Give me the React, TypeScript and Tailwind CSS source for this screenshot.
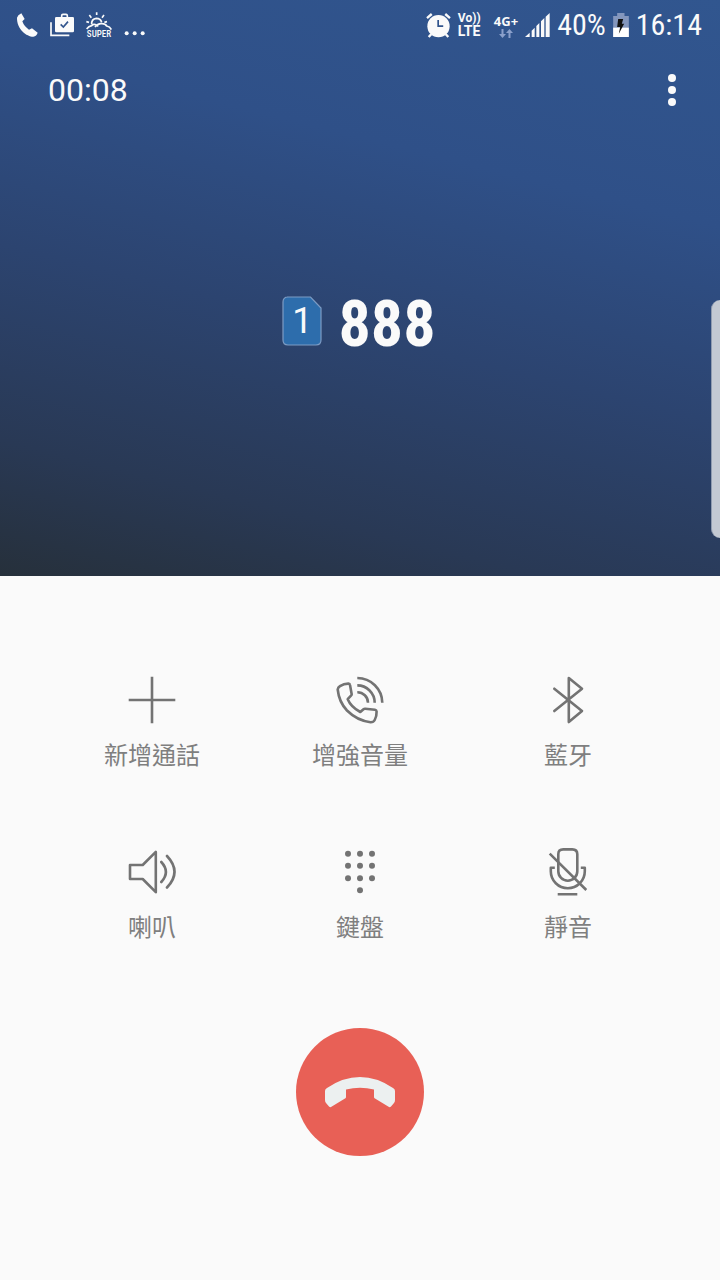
import type { ReactNode } from 'react'

function PhoneIcon() {
  return (
    <svg viewBox="48 36 66 72" className="h-6 w-[22px]" fill="currentColor" aria-hidden="true">
      <path d="M51 50Q53 42 64 37L74 54L67 61Q72 76 87 86L96 82L113 95Q110 105 100 107C80 107 50 84 51 50Z" />
    </svg>
  )
}

function ClipboardIcon() {
  return (
    <svg viewBox="156 38 72 72" className="size-6" fill="none" aria-hidden="true">
      <path d="M159 66V105H214" stroke="currentColor" strokeWidth="5" />
      <path d="M191 52V46Q191 42 195 42H204Q208 42 208 46V52" stroke="currentColor" strokeWidth="5" />
      <rect x="171" y="50" width="57" height="46" rx="4" fill="currentColor" />
      <path d="M188 72L196 80L210 64" stroke="#31548c" strokeWidth="5" />
    </svg>
  )
}

function SuperIcon() {
  return (
    <span className="flex w-[26px] flex-col items-center">
      <svg viewBox="262 29 78 54" className="h-[18px] w-[26px]" fill="none" stroke="currentColor" strokeWidth="5" aria-hidden="true">
        <path d="M264 80Q270 72 279 70Q285 64 293 68L299 72M289 74Q298 62 310 64Q320 64 324 71Q334 73 338 82" />
        <path d="M279 66Q278 50 293 48Q306 48 309 60" />
        <path d="M294 30V38M272 38L278 46M316 38L310 46M263 58L271 60M325 58L317 60" />
      </svg>
      <span className="text-[9px] leading-[9px] font-medium">SUPER</span>
    </span>
  )
}

function MoreDots() {
  return (
    <svg viewBox="372 66 66 66" className="size-[22px]" fill="currentColor" aria-hidden="true">
      <circle cx="380" cy="124" r="6" />
      <circle cx="404" cy="124" r="6" />
      <circle cx="428" cy="124" r="6" />
    </svg>
  )
}

function AlarmIcon() {
  return (
    <svg viewBox="30 36 74 74" className="size-[25px]" fill="none" stroke="currentColor" strokeWidth="7" aria-hidden="true">
      <circle cx="67" cy="75" r="33" fill="currentColor" stroke="none" />
      <path d="M33 51L47 39M101 51L87 39M46 98L38 107M88 98L96 107" />
      <path d="M66 57V75H81" stroke="#31548c" strokeWidth="5" />
    </svg>
  )
}

function SignalIcon() {
  return (
    <svg viewBox="326 36 75 72" className="h-6 w-[25px]" fill="currentColor" aria-hidden="true">
      <path d="M326 108L340 95V108ZM346 108V89L355 80V108ZM360 108V75L369 66V108ZM374 108V61L384 51V108ZM388 108V47L400 36V108Z" />
    </svg>
  )
}

function BatteryIcon() {
  return (
    <svg viewBox="186 36 47 72" className="h-6 w-4" aria-hidden="true">
      <path d="M186 45H198V36H220V45H233V108H186Z" fill="#8396bd" />
      <path d="M186 80H233V108H186Z" fill="#fff" />
      <path d="M201 54H216L212 68H219L203 98L207 78H198Z" fill="#111" />
    </svg>
  )
}

function StatusBar() {
  return (
    <div className="flex h-[50px] items-center justify-between pr-[18px] pl-4 font-['Roboto_Condensed','Roboto',sans-serif]">
      <div className="flex items-center gap-3">
        <PhoneIcon />
        <ClipboardIcon />
        <SuperIcon />
        <MoreDots />
      </div>
      <div className="flex items-center gap-[7px]">
        <AlarmIcon />
        <div className="flex w-[29px] flex-col font-['Roboto',sans-serif] font-bold">
          <span className="text-xs leading-[13px] whitespace-nowrap">Vo))</span>
          <span className="text-sm leading-[13px]">LTE</span>
        </div>
        <div className="flex flex-col items-center font-['Noto_Sans',sans-serif] font-bold">
          <span className="text-[13px] leading-4">4G+</span>
          <svg viewBox="0 0 14 9" className="h-[9px] w-3.5" fill="#8ba0cb" aria-hidden="true">
            <path d="M2.5 0H4.5V5H7L3.500 9L0 5H2.500ZM9.500 9H11.500V4H14L10.500 0L7 4H9.500Z" />
          </svg>
        </div>
        <SignalIcon />
        <span className="text-[30px] leading-9">40%</span>
        <BatteryIcon />
        <span className="text-[30px] leading-9">16:14</span>
      </div>
    </div>
  )
}

function SimBadge() {
  return (
    <span className="relative flex h-[50px] w-10 items-center justify-center text-4xl leading-none">
      <svg viewBox="0 0 40 50" className="absolute inset-0 h-full w-full" aria-hidden="true">
        <path
          d="M5 1H28.500L39 12V44Q39 49 34 49H6Q1 49 1 44V6Q1 1 6 1Z"
          fill="#2d6dac"
          stroke="#7d9cc4"
          strokeWidth="1.200"
        />
      </svg>
      <span className="relative">1</span>
    </span>
  )
}

function ActionIcon({ children }: { children: ReactNode }) {
  return (
    <svg
      viewBox="0 0 48 48"
      className="size-12"
      fill="none"
      stroke="#737373"
      strokeWidth="2.600"
      strokeLinejoin="round"
      aria-hidden="true"
    >
      {children}
    </svg>
  )
}

const keypadDots = [
  [12, 5.7], [24, 5.7], [36, 5.7],
  [12, 17.8], [24, 17.8], [36, 17.8],
  [12, 30.2], [24, 30.2], [36, 30.2],
  [24, 42.2],
]

const actions = [
  { label: '新增通話', icon: <path d="M24 .7V47.300M.7 24H47.300" /> },
  {
    label: '增強音量',
    icon: (
      <>
        <path d="M21.300 2A25 25 0 0 1 46.300 26.700M21.300 9.400A17.400 17.400 0 0 1 38.700 26.700M21.300 16.300A10.500 10.500 0 0 1 32 26.700" />
        <path d="M1.700 13.500Q2 11.500 4 10.200Q8 7.500 12.500 7.600Q13.800 7.700 14 9L15.700 18.200Q15.700 19 15 19.700L11.700 23.200Q15 31 24.300 36L27.500 33.200Q28.200 32.600 29.200 32.700L39 33.800Q40.500 34 40.600 35.500Q40.800 40 38.700 44Q37.500 46.300 34.500 46.200Q21 44.500 11 34.500Q3 26 1.700 13.500Z" />
      </>
    ),
  },
  {
    label: '藍牙',
    icon: <path d="M10.300 12.700L38 35L24.800 46V2L38 12.700L10.300 35" strokeLinecap="round" />,
  },
  {
    label: '喇叭',
    icon: (
      <>
        <path d="M2 17H14.700L27.800 3.800V44.200L14.700 31H2Z" />
        <path d="M33.300 14Q42.500 24 33.300 34M39 8Q54 24 39 39.500" strokeLinecap="round" />
      </>
    ),
  },
  {
    label: '鍵盤',
    icon: keypadDots.map(([x, y]) => <circle key={`${x}-${y}`} cx={x} cy={y} r="3" fill="#737373" stroke="none" />),
  },
  {
    label: '靜音',
    icon: (
      <>
        <path d="M14.300 6.300Q14.300 1.400 19.300 1.400H28.300Q33.300 1.400 33.300 6.300V23.200A9.500 9.500 0 0 1 14.300 23.200Z" />
        <path d="M10.800 19.700H6.800V23.200A17 17 0 0 0 40.800 23.200V19.700H36.800M13.700 46.300H33.300M5.700 5.700L42.300 42" />
      </>
    ),
  },
]

export default function App() {
  return (
    <div className="relative flex min-h-screen flex-col bg-[#fafafa] font-['Roboto','Noto_Sans_CJK_TC',sans-serif]">
      <header className="flex h-[45vh] flex-col bg-[linear-gradient(194deg,#31568f_0%,#2f5088_30%,#2c4470_56%,#293955_82%,#26303b_100%)] text-[#fafafa]">
        <StatusBar />
        <div className="flex h-20 items-center justify-between pr-8 pl-12">
          <time className="text-[32px]">00:08</time>
          <button type="button" aria-label="更多選項" className="flex h-12 w-8 items-center justify-center">
            <svg viewBox="0 0 8 32" className="h-8 w-2" fill="currentColor" aria-hidden="true">
              <circle cx="4" cy="4" r="4" />
              <circle cx="4" cy="16" r="4" />
              <circle cx="4" cy="28" r="4" />
            </svg>
          </button>
        </div>
        <div className="flex items-center justify-center gap-4 pt-[153px] pr-0.5">
          <SimBadge />
          <h1 className="pt-2 font-['Roboto_Condensed','Roboto',sans-serif] text-[64px] leading-[68px] font-bold">888</h1>
        </div>
      </header>

      {/* Edge panel handle */}
      <div className="absolute top-[300px] right-0 h-[238px] w-[9px] rounded-l-xl border-l border-[#8f9bb0] bg-[#c3c9d3]" />

      <main className="flex flex-1 flex-col items-center px-12 pt-[100px] pb-[124px]">
        <div className="grid w-full grid-cols-3 gap-y-[74px]">
          {actions.map(({ label, icon }) => (
            <button key={label} type="button" className="flex flex-col items-center gap-3.5 text-[#7f7f7f]">
              <ActionIcon>{icon}</ActionIcon>
              <span className="text-2xl leading-9">{label}</span>
            </button>
          ))}
        </div>
        <button type="button" aria-label="結束通話" className="mt-[82px] size-32 rounded-full bg-[#e86056]">
          <svg viewBox="0 0 128 128" className="size-32" fill="#ecf0f0" aria-hidden="true">
            <path d="M29 63Q29 61 31 60Q47 49 64 49Q81 49 97 60Q99 61 99 63V72Q99 74 98 75L95 78.500Q94 79.500 93 79L79 70.500Q78 70 78 69V61.500Q64 58 50 61.500V69Q50 70 49 70.500L35 79Q34 79.500 33 78.500L30 75Q29 74 29 72Z" />
          </svg>
        </button>
      </main>
    </div>
  )
}
